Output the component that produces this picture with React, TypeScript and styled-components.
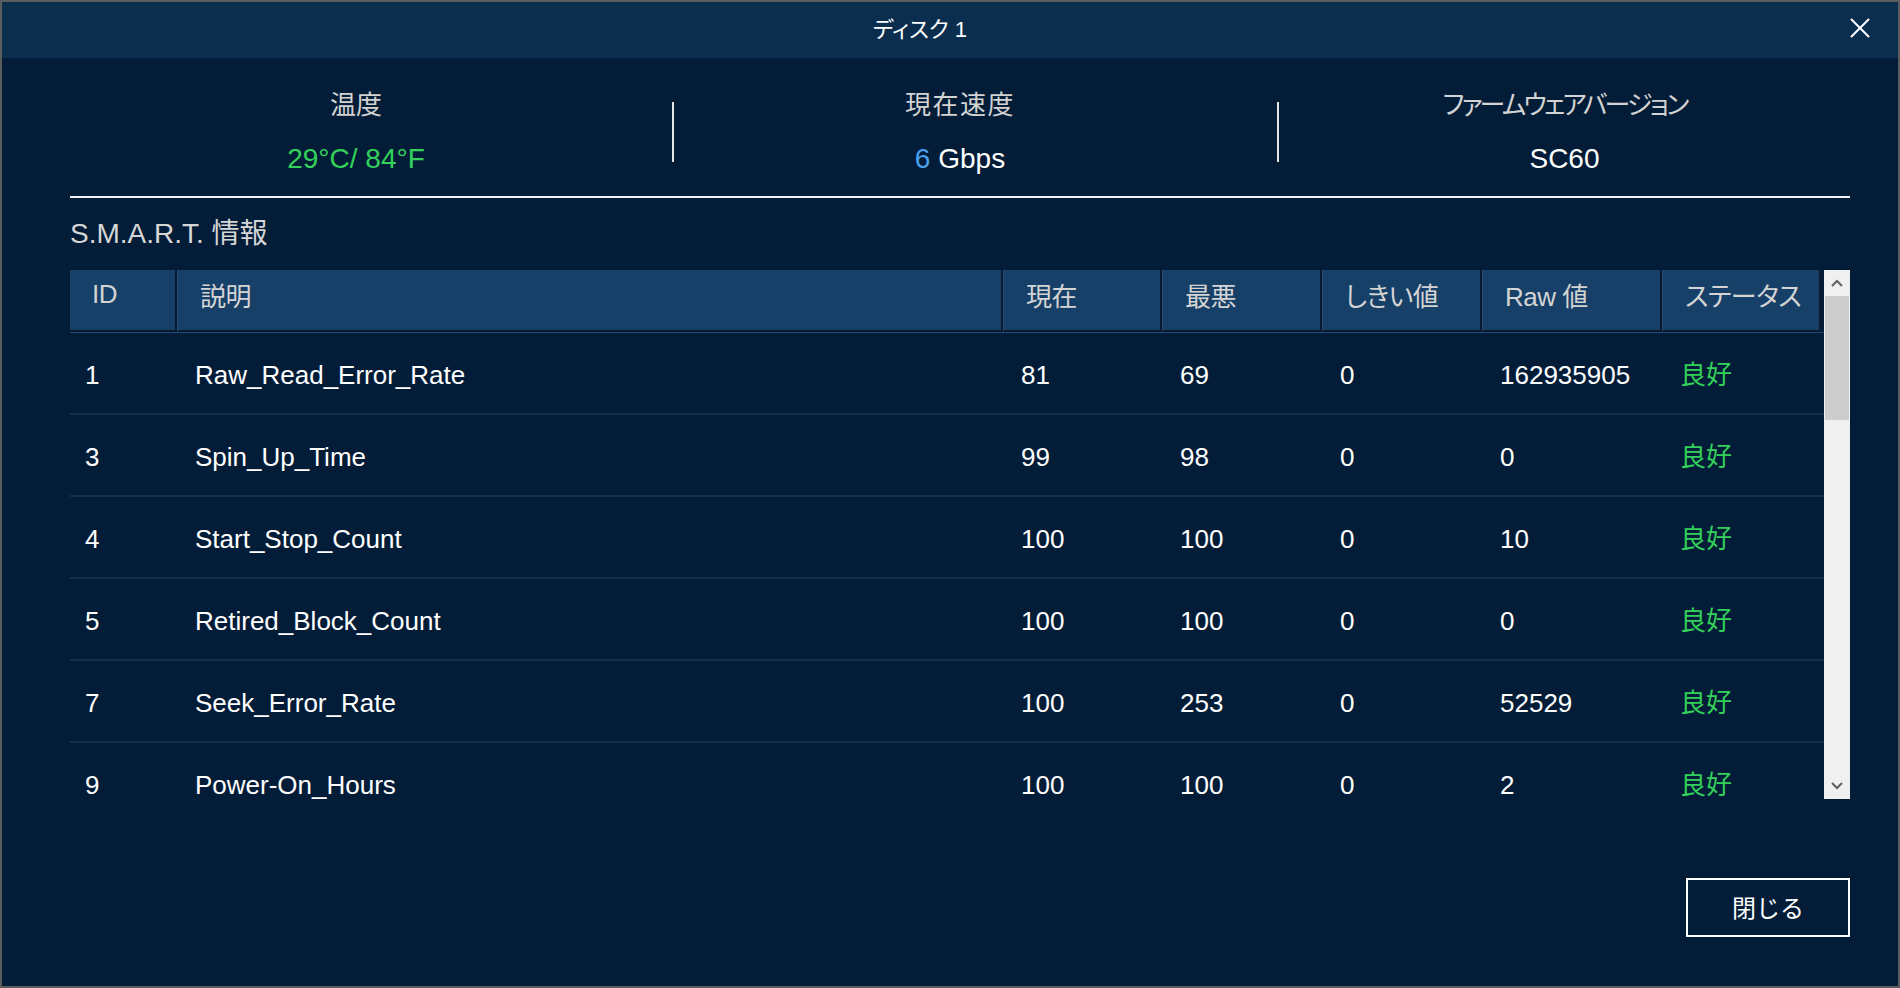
import React from "react";
import styled, { createGlobalStyle } from "styled-components";

const GlobalStyle = createGlobalStyle`
  html, body {
    margin: 0;
    padding: 0;
    background: #031d38;
  }
  body {
    font-family: "Liberation Sans", "Noto Sans CJK JP", sans-serif;
    font-feature-settings: "palt";
  }
  * { box-sizing: border-box; }
`;

const Window = styled.div`
  width: 1900px;
  height: 988px;
  border: 2px solid #5c5c5c;
  background: #031d38;
  display: flex;
  flex-direction: column;
  overflow: hidden;
`;

const TitleBar = styled.div`
  height: 56px;
  flex: none;
  background: #0b2d4e;
  display: flex;
  align-items: center;
  padding-right: 10px;
`;

const Title = styled.div`
  flex: 1;
  text-align: center;
  color: #ffffff;
  font-size: 22px;
  padding: 0 0 6px 6px;
`;

const CloseButton = styled.button`
  width: 56px;
  height: 56px;
  background: none;
  border: none;
  padding: 0 0 4px 0;
  display: flex;
  align-items: center;
  justify-content: center;
  cursor: pointer;
`;

const Body = styled.div`
  flex: 1;
  display: flex;
  flex-direction: column;
  padding: 31px 48px 0 68px;
`;

const StatsRow = styled.div`
  display: grid;
  grid-template-columns: 602px 2px 603px 2px 1fr;
`;

const Stat = styled.div<{ $padRight: number }>`
  display: flex;
  flex-direction: column;
  align-items: center;
  gap: 21px;
  padding-right: ${(p) => p.$padRight}px;
`;

const StatLabel = styled.div<{ $tracking?: number }>`
  font-size: 26px;
  line-height: 32px;
  color: #d3d3d3;
  letter-spacing: ${(p) => p.$tracking ?? 0}px;
`;

const StatValue = styled.div`
  font-size: 28px;
  line-height: 34px;
  color: #ffffff;
`;

const Accent = styled.span<{ $color: string }>`
  color: ${(p) => p.$color};
`;

const VDivider = styled.div`
  align-self: start;
  margin-top: 13px;
  width: 2px;
  height: 60px;
  background: #e6e6e6;
`;

const Rule = styled.div`
  margin-top: 20px;
  height: 2px;
  background: #f2f2f2;
`;

const SectionHeading = styled.div`
  margin-top: 18px;
  font-size: 28px;
  line-height: 36px;
  color: #d6d6d6;
`;

const TableWrap = styled.div`
  margin-top: 18px;
  height: 529px;
  display: flex;
`;

const TableViewport = styled.div`
  flex: 1;
  overflow: hidden;
`;

const COLS = "107px 826px 159px 160px 160px 180px 159px";

const HeaderRow = styled.div`
  display: grid;
  grid-template-columns: ${COLS} 1fr;
  border-bottom: 1px solid #1d4b79;
`;

const HeaderCell = styled.div<{ $first?: boolean }>`
  height: 62px;
  background: #164068;
  border-right: 2px solid #0a1a2c;
  border-bottom: 2px solid #0a1a2c;
  border-left: ${(p) => (p.$first ? "none" : "1px solid #1f4f7f")};
  display: flex;
  align-items: center;
  padding: 0 0 11px 22px;
  font-size: 26px;
  color: #d4d4d4;
  white-space: nowrap;
  letter-spacing: -0.5px;
`;

const Row = styled.div`
  display: grid;
  grid-template-columns: ${COLS} 1fr;
  height: 82px;
  border-bottom: 2px solid #132f4c;
`;

const Cell = styled.div<{ $color?: string; $pad?: number }>`
  display: flex;
  align-items: center;
  padding: 4px 0 0 ${(p) => p.$pad ?? 18}px;
  font-size: 26px;
  line-height: 26px;
  color: ${(p) => p.$color ?? "#ffffff"};
  white-space: nowrap;
`;

const ScrollBar = styled.div`
  width: 26px;
  flex: none;
  display: flex;
  flex-direction: column;
  background: #f0f0f0;
`;

const ScrollArrow = styled.div`
  height: 26px;
  flex: none;
  display: flex;
  align-items: center;
  justify-content: center;
`;

const ScrollTrack = styled.div`
  flex: 1;
  display: flex;
  flex-direction: column;
`;

const ScrollThumb = styled.div`
  height: 124px;
  margin: 0 1px;
  background: #cdcdcd;
`;

const Footer = styled.div`
  margin-top: 79px;
  display: flex;
  justify-content: flex-end;
`;

const CloseTextButton = styled.button`
  width: 164px;
  height: 59px;
  background: transparent;
  border: 2px solid #ffffff;
  color: #ffffff;
  font-family: "Liberation Sans", "Noto Sans CJK JP", sans-serif;
  font-size: 24px;
  padding: 0 0 2px 0;
  cursor: pointer;
`;

const GREEN = "#33d15a";

const rows: [string, string, string, string, string, string][] = [
  ["1", "Raw_Read_Error_Rate", "81", "69", "0", "162935905"],
  ["3", "Spin_Up_Time", "99", "98", "0", "0"],
  ["4", "Start_Stop_Count", "100", "100", "0", "10"],
  ["5", "Retired_Block_Count", "100", "100", "0", "0"],
  ["7", "Seek_Error_Rate", "100", "253", "0", "52529"],
  ["9", "Power-On_Hours", "100", "100", "0", "2"],
];

const headers = ["ID", "説明", "現在", "最悪", "しきい値", "Raw 値", "ステータス"];

const Chevron = ({ up }: { up: boolean }) => (
  <svg width="12" height="8" viewBox="0 0 12 8">
    <polyline
      points={up ? "1,7 6,2 11,7" : "1,1 6,6 11,1"}
      fill="none"
      stroke="#606060"
      strokeWidth="2"
    />
  </svg>
);

export default function App() {
  return (
    <>
      <GlobalStyle />
      <Window>
        <TitleBar>
          <Title>ディスク 1</Title>
          <CloseButton aria-label="close">
            <svg width="20" height="20" viewBox="0 0 20 20">
              <line x1="1" y1="1" x2="19" y2="19" stroke="#ffffff" strokeWidth="2" />
              <line x1="19" y1="1" x2="1" y2="19" stroke="#ffffff" strokeWidth="2" />
            </svg>
          </CloseButton>
        </TitleBar>
        <Body>
          <StatsRow>
            <Stat $padRight={30}>
              <StatLabel>温度</StatLabel>
              <StatValue>
                <Accent $color={GREEN}>29°C/ 84°F</Accent>
              </StatValue>
            </Stat>
            <VDivider />
            <Stat $padRight={31}>
              <StatLabel $tracking={1.5}>現在速度</StatLabel>
              <StatValue>
                <Accent $color="#4aa2f0">6</Accent> Gbps
              </StatValue>
            </Stat>
            <VDivider />
            <Stat $padRight={0}>
              <StatLabel $tracking={-2.8}>ファームウェアバージョン</StatLabel>
              <StatValue>SC60</StatValue>
            </Stat>
          </StatsRow>
          <Rule />
          <SectionHeading>S.M.A.R.T. 情報</SectionHeading>
          <TableWrap>
            <TableViewport>
              <HeaderRow>
                {headers.map((h, i) => (
                  <HeaderCell key={h} $first={i === 0}>
                    {h}
                  </HeaderCell>
                ))}
                <div />
              </HeaderRow>
              {rows.map((r) => (
                <Row key={r[0]}>
                  {r.map((c, i) => (
                    <Cell key={i} $pad={i === 0 ? 15 : 18}>
                      {c}
                    </Cell>
                  ))}
                  <Cell $color={GREEN}>良好</Cell>
                </Row>
              ))}
            </TableViewport>
            <ScrollBar>
              <ScrollArrow>
                <Chevron up />
              </ScrollArrow>
              <ScrollTrack>
                <ScrollThumb />
              </ScrollTrack>
              <ScrollArrow>
                <Chevron up={false} />
              </ScrollArrow>
            </ScrollBar>
          </TableWrap>
          <Footer>
            <CloseTextButton>閉じる</CloseTextButton>
          </Footer>
        </Body>
      </Window>
    </>
  );
}
